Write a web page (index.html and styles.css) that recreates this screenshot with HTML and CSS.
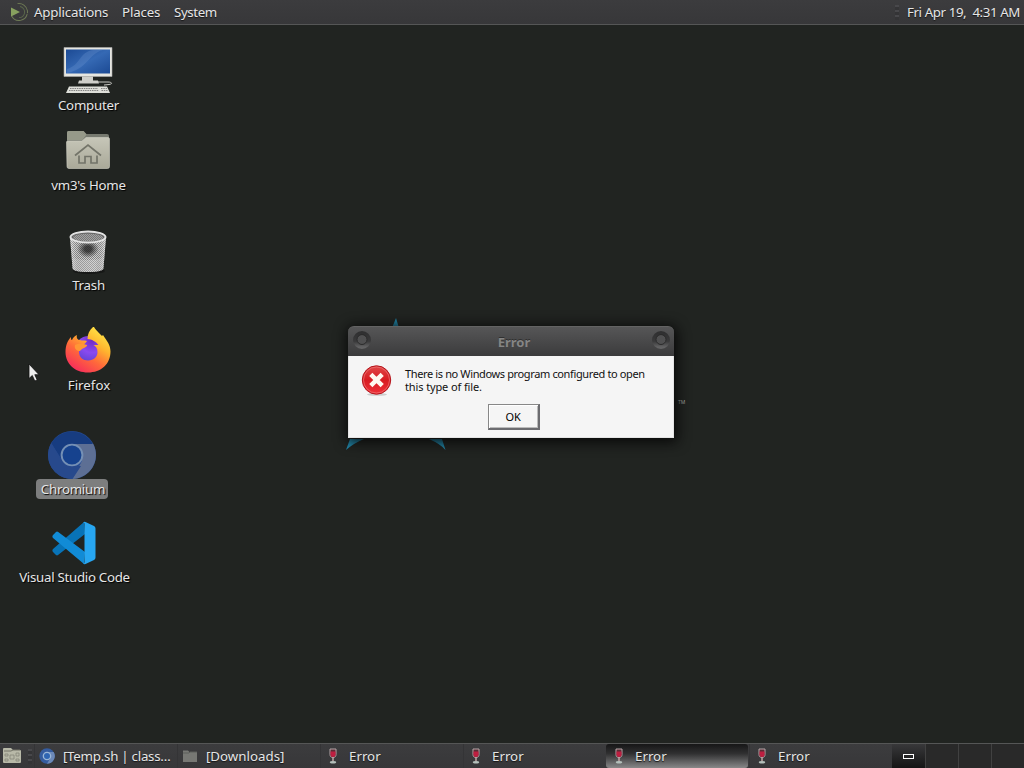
FILE: index.html
```html
<!DOCTYPE html>
<html lang="en">
<head>
<meta charset="utf-8">
<title>Desktop</title>
<link rel="stylesheet" href="styles.css">
</head>
<body>
<svg width="0" height="0" class="defs">
  <defs>
    <linearGradient id="screen" x1="0" y1="0" x2="1" y2="1"><stop offset="0" stop-color="#1c4a94"/><stop offset=".5" stop-color="#3569b4"/><stop offset="1" stop-color="#1c4a94"/></linearGradient>
    <linearGradient id="folder" x1="0" y1="0" x2="0" y2="1"><stop offset="0" stop-color="#c6c6b8"/><stop offset="1" stop-color="#aaa999"/></linearGradient>
    <pattern id="mesh" width="2" height="2" patternUnits="userSpaceOnUse"><rect width="2" height="2" fill="#dedede"/><rect width="1" height="1" fill="#858585"/><rect x="1" y="1" width="1" height="1" fill="#858585"/></pattern>
    <linearGradient id="binshade"><stop offset="0" stop-color="#fff" stop-opacity=".35"/><stop offset=".3" stop-color="#222" stop-opacity=".1"/><stop offset=".7" stop-color="#222" stop-opacity=".05"/><stop offset="1" stop-color="#fff" stop-opacity=".4"/></linearGradient>
    <radialGradient id="hole"><stop offset=".3" stop-color="#222" stop-opacity=".8"/><stop offset="1" stop-color="#222" stop-opacity="0"/></radialGradient>
    <linearGradient id="fox" x1=".85" y1="0" x2=".2" y2="1"><stop offset="0" stop-color="#fff04c"/><stop offset=".35" stop-color="#ffb52e"/><stop offset=".62" stop-color="#ff6a3a"/><stop offset="1" stop-color="#f5265f"/></linearGradient>
    <radialGradient id="globe" cx=".6" cy=".15" r=".9"><stop offset="0" stop-color="#6f2ac4"/><stop offset=".45" stop-color="#8a4af0"/><stop offset="1" stop-color="#4c3fc4"/></radialGradient>
    <linearGradient id="err" x1="0" y1="0" x2="0" y2="1"><stop offset="0" stop-color="#e04848"/><stop offset=".5" stop-color="#d81c22"/><stop offset="1" stop-color="#f03038"/></linearGradient>
    <linearGradient id="ringbtn" x1="0" y1="0" x2="0" y2="1"><stop offset="0" stop-color="#303031"/><stop offset=".6" stop-color="#3a3a3b"/><stop offset="1" stop-color="#626263"/></linearGradient>
    <symbol id="wine" viewBox="0 0 10 16"><path d="M2 1h6v5.500c0 2-1.200 3-3 3S2 8.500 2 6.500z" fill="#5b2b35" stroke="#b5a6a8" stroke-width="1"/><path d="M2.500 3.500h5v3C7.500 8.200 6.500 9 5 9S2.500 8.200 2.500 6.500z" fill="#bd1e40"/><path d="M5 9.500v4" stroke="#c0a5a4" stroke-width="1.500"/><ellipse cx="5" cy="14.300" rx="3.200" ry="1.200" fill="#b4c0bb"/></symbol>
    <symbol id="ring" viewBox="0 0 20 20"><circle cx="10" cy="10" r="7" fill="#505051" stroke="url(#ringbtn)" stroke-width="4"/><circle cx="10" cy="9.500" r="5" fill="none" stroke="#2b2b2b"/></symbol>
  </defs>
</svg>

<header class="panel top">
  <nav class="menus">
    <svg class="distro" width="20" height="20" viewBox="0 0 20 20"><circle cx="10" cy="10" r="8.500" fill="none" stroke="#6e7a55" stroke-width="1" stroke-dasharray="16 1 20 16" transform="rotate(-100 10 10)"/><circle cx="10" cy="10" r="5.600" fill="none" stroke="#59664a" stroke-dasharray="16 20" transform="rotate(-80 10 10)"/><path d="M2 5.500 11 10l-9 4.500z" fill="#87a05f"/></svg>
    <span class="m1">Applications</span><span class="m2">Places</span><span class="m3">System</span>
  </nav>
  <div class="clock"><i class="grip"></i><span>Fri Apr 19,&nbsp; 4:31 AM</span></div>
</header>

<main class="desktop">
  <div class="item computer">
    <svg width="50" height="50" viewBox="0 0 50 50">
      <path d="M1 2.500h48v29H1z" fill="#e6e6e0" stroke="#aaa" stroke-width=".6"/><path d="M3 4.500h44v24H3z" fill="url(#screen)"/><path d="M4 24C18 20 16 7 30 5h10C25 9 25 24 4 28z" fill="#6d96cf" opacity=".3"/>
      <path d="M19 31.500h11v4h5l1 3H15l1-3h3z" fill="#cfcfca"/><path d="M35 37h10c4 0 5 2 1 2.500l-5 .5" fill="none" stroke="#c9c9c4" stroke-width="1"/>
      <path d="M6 41.500h38l3 6.500H3z" fill="#dedfd9"/><path d="M7 43.500h28M6 45.500h30M38 43.500h6M38.500 45.500h6" stroke="#777" stroke-width=".9" stroke-dasharray="1.500 .8"/>
    </svg><span>Computer</span>
  </div>
  <div class="item home">
    <svg width="48" height="48" viewBox="0 0 48 48">
      <path d="M3 8V6.500Q3 5 4.500 5h15l3 3H43q2 0 2 2v8H3z" fill="#777a70"/><path d="M3 14V6.500Q3 5 4.500 5h15l3 3.500-4 5.500z" fill="#969989"/>
      <path d="M2.500 16q0-1 1.500-1h14l4-3.500h22q1.500 0 1.500 1.500v27.500q0 2-2 2H5q-2 0-2-2z" fill="url(#folder)" stroke="#d0d0c4" stroke-width=".6"/>
      <path d="M11 29.500 24 19 37 29.500M15 29.500v7.500h6v-6.500h6V37h6v-7.500" fill="none" stroke="#737469" stroke-width="1.700"/>
    </svg><span>vm3's Home</span>
  </div>
  <div class="item trash">
    <svg width="48" height="48" viewBox="0 0 48 48">
      <ellipse cx="25" cy="43" rx="16" ry="3" fill="#111" opacity=".6"/><path d="M6 9 8.500 40q0 4 15.500 4t15.500-4L42 9z" fill="url(#mesh)"/><ellipse cx="24" cy="21" rx="11" ry="9" fill="url(#hole)"/><path d="M9 30q15 4 30 0v10q-1 4-15 4t-15-4z" fill="#ddd" opacity=".4"/><path d="M6 9 8.500 40q0 4 15.500 4t15.500-4L42 9z" fill="url(#binshade)"/>
      <ellipse cx="24" cy="9" rx="17.500" ry="5.500" fill="#686868" stroke="#e3e3e3" stroke-width="2"/><ellipse cx="24" cy="9.500" rx="15" ry="3.800" fill="url(#mesh)" opacity=".5"/>
    </svg><span>Trash</span>
  </div>
  <div class="item firefox">
    <svg width="48" height="48" viewBox="0 0 48 48">
      <circle cx="25" cy="25" r="15" fill="url(#globe)"/>
      <path d="M30 1c1 2 4 5 8 9l1-1c4 6 7.500 10 7.500 16.500C46.500 38 37 46.500 24 46.500S1.500 38 1.500 26C1.500 19 4 14 7 11c0 2 0 3 1 3 1-2 2-4 5-5-1 3 1 5 3 5 2 1 4 0 7 1-1 2-4 4-6 5-2 1-2 3-2 6 0 5 4 8.500 9 8.500 6 0 9.500-4 9.500-8.500 0-4-2-6-4-7h5c-2-3-7-6-11-6 0-5 2-9 5.500-12z" fill="url(#fox)"/>
      <path d="M11 19c4-2 8-1 12 0 1 2-5 3-7 6-3 0-6-2-5-6z" fill="#ff9734"/>
    </svg><span>Firefox</span>
  </div>
  <div class="item chromium">
    <svg width="48" height="48" viewBox="0 0 48 48">
      <circle cx="24" cy="24" r="24" fill="#254b92"/><path d="M24 12.500h21A24 24 0 0 1 24 48l10-18z" fill="#5d6f94"/><path d="M3.200 12A24 24 0 0 1 44.800 13H24a11 11 0 0 0-10 16z" fill="#173c80"/><path d="M3.200 12 14 30l10 5h9l-8.500 13A24 24 0 0 1 3.200 12z" fill="#27498c"/>
      <circle cx="24" cy="24" r="10.400" fill="#16428e" stroke="#7590b5" stroke-width="1.900"/>
    </svg><span>Chromium</span>
  </div>
  <div class="item code">
    <svg width="44" height="44" viewBox="0 0 44 44">
      <path d="M1 28 32 1l1 12L6 34q-1 .8-2 0l-3-3q-1.200-1.500 0-3z" fill="#0873b7"/><path d="M1 14 4 11q1-1 2.200 0L33 31l-1 12L1 17q-1.200-1.500 0-3z" fill="#118bd6"/><path d="M31 1.500Q32 .5 33.500 1l8.500 4q1.500.8 1.500 2.500v29q0 1.700-1.500 2.500l-8.500 4q-1.500.5-2.500-.5 1.500.5 1.500-1.500V3Q32.500 1 31 1.500z" fill="#27a6f1"/>
    </svg><span>Visual Studio Code</span>
  </div>

  <svg class="wallpaper" width="344" height="136" viewBox="0 0 344 136"><path d="M50 0 46 10h7zM0 132l4-11H18q-10 4-18 11zM83 121h13l3.500 11q-5-6-16.500-11z" fill="#2187aa"/></svg>
  <span class="tm">TM</span>

  <section class="dialog">
    <div class="titlebar">
      <svg width="20" height="20"><use href="#ring"/></svg>
      <b>Error</b>
      <svg width="20" height="20"><use href="#ring"/></svg>
    </div>
    <div class="content">
      <svg class="erricon" width="32" height="32" viewBox="0 0 32 32"><ellipse cx="16" cy="29.500" rx="10" ry="1.300" fill="#ccc"/><circle cx="15.500" cy="15" r="14.200" fill="url(#err)" stroke="#b3131a" stroke-width="1"/><circle cx="15.500" cy="15" r="13" fill="none" stroke="#ee7777" stroke-width=".7"/><path d="m9.800 9.300 11.400 11.400m0-11.400L9.800 20.700" stroke="#fff8f0" stroke-width="4.500"/></svg>
      <p><span class="l1">There is no Windows program configured to open</span><br><span class="l2">this type of file.</span></p>
      <button>OK</button>
    </div>
  </section>
  <svg class="cursor" width="14" height="20" viewBox="0 0 14 20"><path d="M1 1v14.500l3.300-3L6.800 18l2.400-1-2.400-5.300H11z" fill="#eee" stroke="#111" stroke-width=".8"/></svg>
</main>

<footer class="panel bottom">
  <svg class="show" width="20" height="20" viewBox="0 0 20 20"><path d="M1 3q0-1 1-1h7l2 2h7q1 0 1 1v11q0 1-1 1H2q-1 0-1-1z" fill="#b8b9a8"/><path d="M2 5h7l2-1h7" stroke="#727367" fill="none"/><path d="M3 8h3v2H3zm5 1h4v4H8zm6-2h3v3h-3zM3 13h3v2H3zm11 0h3v2h-3z" fill="none" stroke="#85877a" stroke-width=".8"/></svg>
  <i class="grip"></i>
  <div class="tasks">
    <div class="task"><svg width="16" height="16" viewBox="0 0 48 48"><circle cx="24" cy="24" r="23" fill="#355c9f"/><path d="M24 12h20A23 23 0 0 1 24 47l10-17z" fill="#6c89b8"/><circle cx="24" cy="24" r="11" fill="#2f65b3" stroke="#9bb6d7" stroke-width="4"/></svg><span class="t1">[Temp.sh | class…</span></div>
    <div class="task"><svg width="16" height="16" viewBox="0 0 16 16"><path d="M1 2.500h5l1.500 1.500H15v10H1z" fill="#777874"/><path d="M1 5h6l1-1h7" stroke="#5d5e5b" fill="none"/></svg><span class="t2">[Downloads]</span></div>
    <div class="task"><svg width="16" height="16"><use href="#wine"/></svg><span>Error</span></div>
    <div class="task"><svg width="16" height="16"><use href="#wine"/></svg><span>Error</span></div>
    <div class="task active"><svg width="16" height="16"><use href="#wine"/></svg><span>Error</span></div>
    <div class="task"><svg width="16" height="16"><use href="#wine"/></svg><span>Error</span></div>
  </div>
  <div class="spaces"><div class="space current"><i></i></div><div class="space"></div><div class="space"></div><div class="space"></div></div>
</footer>
</body>
</html>
```
FILE: styles.css
```css
* { box-sizing: border-box; }
body { margin: 0; width: 1024px; height: 768px; overflow: hidden; display: flex; flex-direction: column; background: #212421; color: #e6e6e6; font: 13.3px/18px "Noto Sans", sans-serif; }
svg { display: block; flex: none; }
span { white-space: nowrap; }
.defs { position: absolute; }
.panel { display: flex; flex: none; background: linear-gradient(#3c3c3e, #373739); text-shadow: 0 1px 1px #161616; }
.top { height: 25px; justify-content: space-between; border-bottom: 1px solid #555656; padding: 0 4px 0 9px; }
.menus { display: flex; align-items: center; }
.distro { margin-right: 5px; }
.m1 { width: 88px; letter-spacing: -.18px; }
.m2 { width: 52px; letter-spacing: -.15px; }
.m3 { letter-spacing: -.4px; }
.clock { display: flex; align-items: center; gap: 8px; letter-spacing: -.4px; }
.grip { flex: none; width: 4px; height: 15px; background: repeating-linear-gradient(#48484b 0 2px, #343436 2px 5px); }
.desktop { position: relative; flex: 1; }
.item { position: absolute; width: 140px; display: flex; flex-direction: column; align-items: center; text-shadow: 1px 1px 1px #000; letter-spacing: -.25px; }
.computer { left: 18px; top: 20px; }
.computer span { margin: 1px 0 0 1px; }
.home { left: 18px; top: 101px; }
.home span { margin: 2px 0 0 1px; }
.trash { left: 18px; top: 203px; }
.trash span { margin-left: 1px; }
.firefox { left: 18px; top: 301px; }
.firefox span { margin: 2px 0 0 2px; letter-spacing: 0; }
.chromium { left: 2px; top: 406px; }
.chromium span { background: #7d7e7e; border-radius: 4px; width: 72px; height: 20px; line-height: 20px; text-align: center; padding-left: 2px; }
.code { left: 4px; top: 496px; }
.code span { margin: 3px 0 0 1px; letter-spacing: -.29px; }
.wallpaper { position: absolute; left: 346px; top: 293px; }
.tm { position: absolute; left: 678px; top: 368px; font-size: 5px; color: #aaa; }
.cursor { position: absolute; left: 28px; top: 338px; }
.dialog { position: absolute; left: 348px; top: 301px; width: 326px; height: 112px; border-radius: 6px 6px 0 0; box-shadow: 1px 2px 13px 2px #080808; color: #111; }
.titlebar { height: 30px; padding: 0 3px 2px 4px; display: flex; align-items: center; justify-content: space-between; background: linear-gradient(#565657, #3b3b3c); border-radius: 6px 6px 0 0; border-top: 1px solid #636363; color: #858585; text-shadow: 0 -1px #303030; font-size: 13px; }
.titlebar svg { margin-top: -1px; }
.titlebar b { padding: 3px 0 0 5px; }
.content { height: 82px; background: #f5f5f5; border: 1px solid #e4e4e4; border-top: 0; display: grid; grid-template: 48px 27px / 56px 1fr; }
.erricon { margin: 9px 0 0 12px; }
.content p { margin: 11px 0 0; font-size: 11px; line-height: 13px; }
.l1 { letter-spacing: -.37px; }
.l2 { letter-spacing: -.12px; }
.content button { grid-column: 1 / 3; margin-left: 139px; width: 52px; height: 26px; padding: 0 1px 0 0; background: #f5f5f5; border: 1px solid #888; border-right: 2px solid #6c6c70; border-bottom: 2px solid #6c6c70; box-shadow: inset 1px 1px #fff, inset -1px -1px #bbb; font: 11px "Noto Sans", sans-serif; letter-spacing: -.3px; }
.bottom { height: 25px; border-top: 1px solid #555656; align-items: center; padding-left: 2px; }
.bottom .grip { margin: 0 2px 0 6px; }
.tasks { flex: none; display: grid; grid-template-columns: repeat(6, 143px); height: 24px; }
.task { display: flex; align-items: center; gap: 8px; padding-left: 4px; border-left: 1px solid #343436; }
.t1 { letter-spacing: -.25px; }
.active { background: linear-gradient(#161617 0, #303031 40%, #79797a 90%, #888); border-radius: 3px; margin-right: 1px; border-left: 0; padding-left: 5px; }
.spaces { flex: 1; display: grid; grid-template-columns: repeat(3, 33px) 1fr; height: 24px; }
.space { background: #292929; border-left: 1px solid #414141; }
.current { display: flex; align-items: center; justify-content: center; background: linear-gradient(#38383a, #151515); border-left: 0; }
.current i { width: 11px; height: 5px; border: 1px solid #fff; }
```
